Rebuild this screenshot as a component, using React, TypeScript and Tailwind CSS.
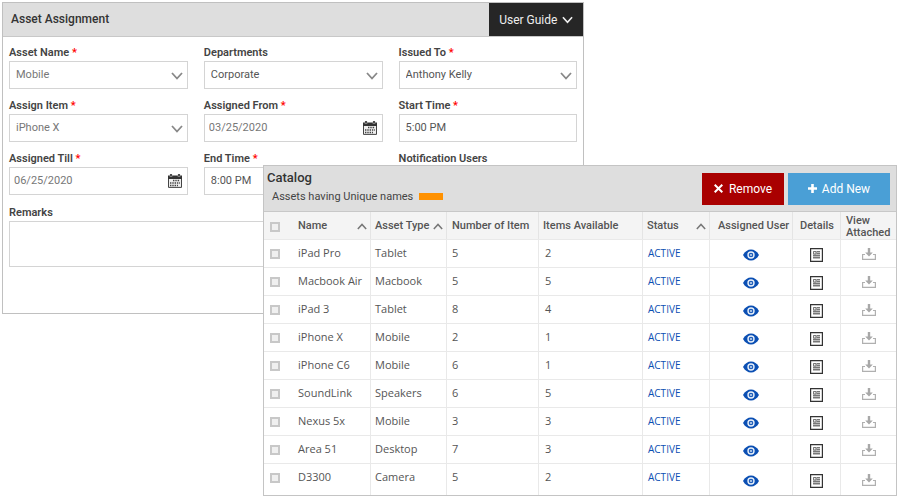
import type { ReactNode } from "react";

const selectData = {
  name: ["Mobile", "Tablet", "Macbook"],
  departments: ["Corporate", "Finance", "Support"],
  issued: ["Anthony Kelly"],
  item: ["iPhone X", "iPhone C6", "iPad Pro"],
};

const assets = [
  { name: "iPad Pro", type: "Tablet", count: 5, available: 2 },
  { name: "Macbook Air", type: "Macbook", count: 5, available: 5 },
  { name: "iPad 3", type: "Tablet", count: 8, available: 4 },
  { name: "iPhone X", type: "Mobile", count: 2, available: 1 },
  { name: "iPhone C6", type: "Mobile", count: 6, available: 1 },
  { name: "SoundLink", type: "Speakers", count: 6, available: 5 },
  { name: "Nexus 5x", type: "Mobile", count: 3, available: 3 },
  { name: "Area 51", type: "Desktop", count: 7, available: 3 },
  { name: "D3300", type: "Camera", count: 5, available: 2 },
];

function Chevron({ up = false, className = "" }: { up?: boolean; className?: string }) {
  return (
    <svg viewBox="0 0 12 8" fill="none" stroke="currentColor" aria-hidden="true" className={className}>
      <path d={up ? "M1 7 L6 1.5 L11 7" : "M1 1 L6 6.5 L11 1"} strokeWidth="1.8" />
    </svg>
  );
}

function CalendarIcon() {
  return (
    <svg width="14" height="14" viewBox="0 0 14 14" aria-hidden="true">
      <path d="M0 1.5h14V5H0z" fill="#333" />
      <path d="M3 0v3M11 0v3" stroke="#bbb" strokeWidth="2.400" />
      <path d="M3 0v2.500M11 0v2.500" stroke="#222" strokeWidth="1.4" />
      <path d="M0.5 5v8.400h13V5" fill="#eee" stroke="#444" />
      <path d="M5 6.500h7M2 9h10M2 11.500h8" stroke="#444" strokeWidth="1.5" strokeDasharray="1.400 0.900" />
    </svg>
  );
}

function EyeIcon() {
  return (
    <svg width="16" height="12" viewBox="0 0 16 12" aria-hidden="true">
      <path d="M0 6C2 2.4 4.8 .5 8 .5S14 2.4 16 6c-2 3.600-4.800 5.500-8 5.500S2 9.600 0 6z" fill="#0b4fb3" />
      <circle cx="8" cy="6" r="3" fill="#0b4fb3" stroke="#e8f0fa" strokeWidth="1.4" />
      <circle cx="8" cy="6" r="1.300" fill="#9dbbe3" />
    </svg>
  );
}

function DetailsIcon() {
  return (
    <svg width="13" height="14" viewBox="0 0 13 14" aria-hidden="true">
      <path d="M.5.500h12v13H.5z" fill="#fff" stroke="#333" strokeWidth="1.4" />
      <path d="M3 3h7v8H3z" fill="#bbb" />
      <path d="M3.500 3.500h2.500v2.500H3.500z" fill="#eee" stroke="#777" />
      <path d="M7 3.500h3M7 5.500h3M3 7.500h7M3 9.500h7" stroke="#777" />
    </svg>
  );
}

function DownloadIcon() {
  return (
    <svg width="14" height="12" viewBox="0 0 14 12" aria-hidden="true">
      <path d="M3 6.500H.600v4.900h12.800V6.500H11" fill="none" stroke="#b0b0b0" strokeWidth="1.2" />
      <path d="M5.800 0h2.400v4.500h2.600L7 8.500 3.200 4.500h2.600z" fill="#a8a8a8" />
    </svg>
  );
}

function Field({ id, label, required, children }: { id: string; label: string; required?: boolean; children: ReactNode }) {
  return (
    <div className="flex min-w-0 flex-col">
      <label htmlFor={id} className="h-[18px] text-[11px] leading-5 font-semibold whitespace-nowrap text-[#444]">
        {label}
        {required && <span className="text-[#f00]"> *</span>}
      </label>
      {children}
    </div>
  );
}

const box = "h-7 w-full appearance-none rounded-none border border-[#d4d4d4] bg-white text-[11px] outline-none";

function SelectField({ id, label, required, options, muted }: { id: string; label: string; required?: boolean; options: string[]; muted?: boolean }) {
  return (
    <Field id={id} label={label} required={required}>
      <div className="grid items-center">
        <select id={id} className={`${box} col-start-1 row-start-1 pr-6 pl-[6px] ${muted ? "text-[#777]" : "text-[#555]"}`}>
          {options.map((o) => (
            <option key={o}>{o}</option>
          ))}
        </select>
        <Chevron className="pointer-events-none col-start-1 row-start-1 mt-[2px] mr-[5px] h-2 w-3 justify-self-end text-[#888]" />
      </div>
    </Field>
  );
}

function DateField({ id, label, value }: { id: string; label: string; value: string }) {
  return (
    <Field id={id} label={label} required>
      <div className="flex h-7 items-center border border-[#d4d4d4] bg-white pr-[5px] pl-1">
        <input id={id} type="text" defaultValue={value} className="w-0 min-w-0 flex-1 bg-transparent text-[11px] text-[#777] outline-none" />
        <button type="button" aria-label={`Pick ${label}`}>
          <CalendarIcon />
        </button>
      </div>
    </Field>
  );
}

function TextField({ id, label, value }: { id: string; label: string; value: string }) {
  return (
    <Field id={id} label={label} required>
      <input id={id} type="text" defaultValue={value} className={`${box} px-[6px] pb-[2px] text-[#555]`} />
    </Field>
  );
}

function Tick({ label }: { label: string }) {
  return (
    <input type="checkbox" aria-label={label} className="block size-[10px] shrink-0 appearance-none border-2 border-[#c8c8c8] bg-[#f0f0f0] checked:bg-[#0b4fb3]" />
  );
}

const th = "border-r border-[#e4e4e4] p-0 pt-[2px] text-left font-medium last:border-r-0";
const td = "border-r border-[#e9e9e9] p-0 last:border-r-0";
const iconTd = "border-r border-[#e9e9e9] p-0 pt-[2px] last:border-r-0";

function SortHead({ children }: { children: string }) {
  return (
    <button type="button" className="flex w-full items-center justify-between pr-[3px] pl-1">
      {children}
      <Chevron up className="h-[7px] w-[10px] text-[#777]" />
    </button>
  );
}

export default function App() {
  return (
    <main className="relative min-h-screen overflow-hidden bg-white p-[2px] font-[Roboto,'Noto_Sans',sans-serif]">
      <section className="w-[65%] border border-[#c0c0c0] pb-[46px]">
        <header className="flex h-[34px] items-stretch justify-between border-b border-[#c8c8c8] bg-[#dedede]">
          <h1 className="pl-2 text-[12px] leading-8 font-medium text-[#333]">Asset Assignment</h1>
          <button type="button" className="flex items-center gap-[5px] bg-[#262626] px-[10px] text-[12px] text-[#eee]">
            User Guide
            <Chevron className="h-2 w-[11px]" />
          </button>
        </header>
        <form className="flex flex-col gap-2 px-[6px] pt-[6px]">
          <div className="grid grid-cols-3 gap-x-4 gap-y-[7px]">
            <SelectField id="asset-name" label="Asset Name" required options={selectData.name} muted />
            <SelectField id="departments" label="Departments" options={selectData.departments} />
            <SelectField id="issued-to" label="Issued To" required options={selectData.issued} />
            <SelectField id="assign-item" label="Assign Item" required options={selectData.item} muted />
            <DateField id="assigned-from" label="Assigned From" value="03/25/2020" />
            <TextField id="start-time" label="Start Time" value="5:00 PM" />
            <DateField id="assigned-till" label="Assigned Till" value="06/25/2020" />
            <TextField id="end-time" label="End Time" value="8:00 PM" />
            <Field id="notification-users" label="Notification Users">
              <input id="notification-users" type="text" className={`${box} px-[6px]`} />
            </Field>
          </div>
          <Field id="remarks" label="Remarks">
            <textarea id="remarks" className="block h-[46px] w-full resize-none border border-[#d4d4d4] bg-white outline-none" />
          </Field>
        </form>
      </section>

      <section className="absolute top-[165px] right-[3px] left-[263px] border border-[#c4c4c4] bg-white">
        <header className="flex h-[46px] items-center justify-between border-b border-[#c8c8c8] bg-[#dedede] pr-[6px] pl-[3px]">
          <div className="pb-1">
            <h2 className="text-[13px] leading-5 font-medium text-[#333]">Catalog</h2>
            <p className="flex items-center gap-[6px] pl-[5px] text-[11px] leading-[18px] text-[#444]">
              Assets having Unique names
              <span className="h-[7px] w-6 bg-[#ff9100]" />
            </p>
          </div>
          <div className="flex gap-1 text-[12px] text-white">
            <button type="button" className="flex h-8 w-[82px] items-center justify-center gap-[6px] bg-[#a90000]">
              <svg width="9" height="9" viewBox="0 0 9 9" stroke="currentColor" strokeWidth="2" aria-hidden="true">
                <path d="M.7.700l7.600 7.600M8.300.700L.7 8.300" />
              </svg>
              Remove
            </button>
            <button type="button" className="flex h-8 w-[102px] items-center justify-center gap-[5px] bg-[#4a9fd6]">
              <svg width="9" height="9" viewBox="0 0 9 9" stroke="currentColor" strokeWidth="2.600" aria-hidden="true">
                <path d="M4.500 0v9M0 4.500h9" />
              </svg>
              Add New
            </button>
          </div>
        </header>
        <table className="w-full table-fixed border-separate border-spacing-0 text-[11px] text-[#555]">
          <colgroup>
            <col className="w-[107px]" />
            <col className="w-[76px]" />
            <col className="w-[92px]" />
            <col className="w-[104px]" />
            <col className="w-[67px]" />
            <col className="w-[83px]" />
            <col className="w-[48px]" />
            <col />
          </colgroup>
          <thead>
            <tr className="h-[27px] bg-[#f4f4f4]">
              <th className={th}>
                <div className="flex items-center pl-[6px]">
                  <Tick label="Select all assets" />
                  <div className="ml-[14px] flex-1">
                    <SortHead>Name</SortHead>
                  </div>
                </div>
              </th>
              <th className={th}>
                <SortHead>Asset Type</SortHead>
              </th>
              <th className={`${th} pl-[5px]`}>Number of Item</th>
              <th className={`${th} pl-1`}>Items Available</th>
              <th className={th}>
                <SortHead>Status</SortHead>
              </th>
              <th className={`${th} pl-2 whitespace-nowrap`}>Assigned User</th>
              <th className={`${th} pl-[7px] whitespace-nowrap`}>Details</th>
              <th className={`${th} pl-[5px] leading-[12px]`}>View Attached</th>
            </tr>
          </thead>
          <tbody className="font-['Open_Sans','Noto_Sans',sans-serif] [&_td]:border-t [&_td]:border-t-[#e9e9e9]">
            {assets.map((a) => (
              <tr key={a.name} className="h-7 last:h-8 last:[&>td:nth-child(-n+5)]:pb-1">
                <td className={td}>
                  <div className="flex items-center gap-[18px] pl-[6px] whitespace-nowrap">
                    <Tick label={`Select ${a.name}`} />
                    {a.name}
                  </div>
                </td>
                <td className={`${td} pl-1`}>{a.type}</td>
                <td className={`${td} pl-[5px]`}>{a.count}</td>
                <td className={`${td} pl-[6px]`}>{a.available}</td>
                <td className={`${td} pl-[5px] text-[10px] text-[#0b4fb3]`}>ACTIVE</td>
                <td className={iconTd}>
                  <button type="button" aria-label={`Assigned user of ${a.name}`} className="mx-auto block">
                    <EyeIcon />
                  </button>
                </td>
                <td className={iconTd}>
                  <button type="button" aria-label={`Details of ${a.name}`} className="mx-auto block">
                    <DetailsIcon />
                  </button>
                </td>
                <td className={td}>
                  <button type="button" aria-label={`Download attachment of ${a.name}`} className="mx-auto block">
                    <DownloadIcon />
                  </button>
                </td>
              </tr>
            ))}
          </tbody>
        </table>
      </section>
    </main>
  );
}
